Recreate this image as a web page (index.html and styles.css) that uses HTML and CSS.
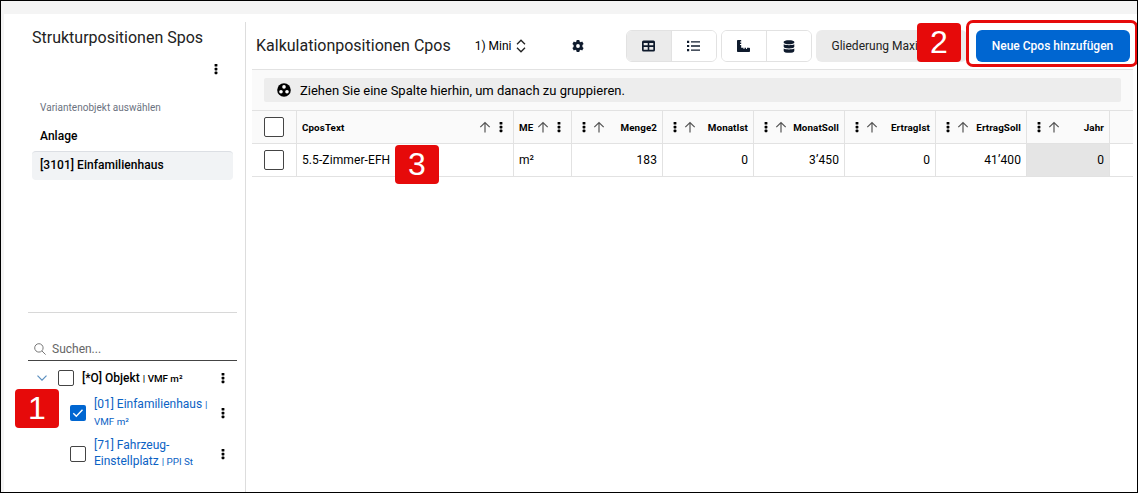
FILE: index.html
```html
<!DOCTYPE html>
<html lang="de">
<head>
  <meta charset="utf-8">
  <title>Kalkulationpositionen</title>
  <link rel="stylesheet" href="styles.css">
</head>
<body>

  <!-- Icons -->
  <svg class="sprite">
    <symbol id="dots" viewBox="0 0 4 12">
      <rect x="0.6" y="1" width="2.8" height="2.6" rx="0.6"/>
      <rect x="0.6" y="4.8" width="2.8" height="2.6" rx="0.6"/>
      <rect x="0.6" y="8.6" width="2.8" height="2.6" rx="0.6"/>
    </symbol>
    <symbol id="arrow" viewBox="0 0 12 12">
      <path d="M6 11.5V1.8M1.3 6.2L6 1.5l4.7 4.7" fill="none" stroke="#555" stroke-width="1.2"/>
    </symbol>
  </svg>

  <div class="app">
    <div class="sidebar">
      <h2>Strukturpositionen Spos</h2>
      <div class="side-menu"><svg class="dots"><use href="#dots"/></svg></div>

      <div class="variants">
        <div class="variant-label">Variantenobjekt auswählen</div>
        <div class="variant">Anlage</div>
        <div class="variant active">[3101] Einfamilienhaus</div>
      </div>

      <div class="search">
        <svg width="12" height="12" viewBox="0 0 12 12" fill="none" stroke="#777"><circle cx="4.9" cy="4.9" r="4.2"/><path d="M8 8l3.6 3.6"/></svg>
        <span>Suchen...</span>
      </div>

      <div class="tree">
        <div class="node root">
          <svg class="chevron" viewBox="0 0 10 6"><path d="M0.5 0.7L5 5.2l4.5-4.5" fill="none" stroke="#5b8fbf" stroke-width="1.2"/></svg>
          <span class="check"></span>
          <div class="node-text">[*O] Objekt <small>| VMF m²</small></div>
          <svg class="dots"><use href="#dots"/></svg>
        </div>
        <div class="node child">
          <span class="check checked"><svg viewBox="0 0 16 16"><path d="M3.3 8.2l3 3 6.2-6.4" fill="none" stroke="#fff" stroke-width="1.4"/></svg></span>
          <div class="node-text">[01] Einfamilienhaus <small>|<br>VMF m²</small></div>
          <svg class="dots"><use href="#dots"/></svg>
        </div>
        <div class="node child last">
          <span class="check"></span>
          <div class="node-text">[71] Fahrzeug-<br>Einstellplatz <small>| PPI St</small></div>
          <svg class="dots"><use href="#dots"/></svg>
        </div>
      </div>
    </div>

    <div class="main">
      <div class="toolbar">
        <h2>Kalkulationpositionen Cpos</h2>
        <div class="view-select">1) Mini
          <svg width="10" height="14" viewBox="0 0 10 14" fill="none" stroke="#222" stroke-width="1.3"><path d="M1 5.3L5 1.2l4 4.1M1 8.7l4 4.1 4-4.1"/></svg>
        </div>
        <svg class="gear" viewBox="0 0 12 12"><path fill-rule="evenodd" d="M4.7 0h2.6l.35 1.6 1 .55L10.2 1.6l1.4 2.3-1.2 1.2v1.8l1.2 1.2-1.4 2.3-1.55-.55-1 .55L7.3 12H4.7l-.35-1.6-1-.55-1.55.55L.4 8.1l1.2-1.2V5.1L.4 3.9l1.4-2.3 1.55.55 1-.55zM6 4.1a1.9 1.9 0 1 0 0 3.8 1.9 1.9 0 0 0 0-3.8z"/></svg>
        <div class="btn-group">
          <button class="on"><svg width="13" height="12" viewBox="0 0 13 12"><path fill-rule="evenodd" d="M1.5 0.5h10A1.5 1.5 0 0 1 13 2v8a1.5 1.5 0 0 1-1.5 1.5h-10A1.5 1.5 0 0 1 0 10V2A1.5 1.5 0 0 1 1.5.5zM1.7 3v2.3h4V3zM7.3 3v2.3h4V3zM1.7 6.9v2.8h4V6.9zM7.3 6.9v2.8h4V6.9z"/></svg></button>
          <button><svg width="13" height="12" viewBox="0 0 13 12"><path d="M0 .8h2.2V3H0zM4 1.2h9v1.4H4zM0 4.9h2.2v2.2H0zM4 5.3h9v1.4H4zM0 9h2.2v2.2H0zM4 9.4h9v1.4H4z"/></svg></button>
        </div>
        <div class="btn-group">
          <button><svg width="13" height="12" viewBox="0 0 13 12"><path d="M.8 0h3.4v1.6H3v.9h1.2v1.6H3V5h1.2v2.8H6.500V9h1V7.800H9V9h1V7.800h2.200a.8.8 0 0 1 .8.8v2.600a.8.8 0 0 1-.8.8H.8a.8.8 0 0 1-.8-.8V.8A.8.8 0 0 1 .8 0z"/></svg></button>
          <button><svg width="12" height="13" viewBox="0 0 12 13"><path d="M6 0.2c3 0 5.300.700 5.300 1.600v.9c0 .9-2.300 1.500-5.300 1.500S.7 3.600.7 2.700v-.9C.7.9 3 .2 6 .2zM.7 4.300C2 5 4 5.200 6 5.200s4-.2 5.300-.9v2.500C11.300 7.800 9 8.400 6 8.400S.7 7.800.7 6.800zM.7 8.500C2 9.200 4 9.400 6 9.400s4-.2 5.300-.9v2.400c0 1.200-2.300 1.900-5.300 1.900s-5.300-.7-5.300-1.900z"/></svg></button>
        </div>
        <button class="btn-grey">Gliederung Maxi</button>
        <button class="btn-primary">Neue Cpos hinzufügen</button>
        <div class="highlight"></div>
      </div>

      <div class="grid">
        <div class="group-panel">
          <div class="drop-zone">
            <svg width="14" height="14" viewBox="0 0 14 14"><circle cx="7" cy="7" r="6.8"/><g fill="#fff"><circle cx="7" cy="3.9" r="1.8"/><circle cx="4" cy="8.8" r="1.8"/><circle cx="10" cy="8.8" r="1.8"/></g></svg>
            <span>Ziehen Sie eine Spalte hierhin, um danach zu gruppieren.</span>
          </div>
        </div>
        <div class="row head">
          <div class="cell"><span class="check big"></span></div>
          <div class="cell"><b>CposText</b><svg class="arrow"><use href="#arrow"/></svg><svg class="dots"><use href="#dots"/></svg></div>
          <div class="cell"><b>ME</b><svg class="arrow"><use href="#arrow"/></svg><svg class="dots"><use href="#dots"/></svg></div>
          <div class="cell num"><svg class="dots"><use href="#dots"/></svg><svg class="arrow"><use href="#arrow"/></svg><b>Menge2</b></div>
          <div class="cell num"><svg class="dots"><use href="#dots"/></svg><svg class="arrow"><use href="#arrow"/></svg><b>MonatIst</b></div>
          <div class="cell num"><svg class="dots"><use href="#dots"/></svg><svg class="arrow"><use href="#arrow"/></svg><b>MonatSoll</b></div>
          <div class="cell num"><svg class="dots"><use href="#dots"/></svg><svg class="arrow"><use href="#arrow"/></svg><b>ErtragIst</b></div>
          <div class="cell num"><svg class="dots"><use href="#dots"/></svg><svg class="arrow"><use href="#arrow"/></svg><b>ErtragSoll</b></div>
          <div class="cell num"><svg class="dots"><use href="#dots"/></svg><svg class="arrow"><use href="#arrow"/></svg><b>Jahr</b></div>
        </div>
        <div class="row">
          <div class="cell"><span class="check big"></span></div>
          <div class="cell">5.5-Zimmer-EFH</div>
          <div class="cell">m²</div>
          <div class="cell num">183</div>
          <div class="cell num">0</div>
          <div class="cell num">3’450</div>
          <div class="cell num">0</div>
          <div class="cell num">41’400</div>
          <div class="cell num locked">0</div>
        </div>
      </div>
    </div>
  </div>

  <!-- Step markers -->
  <div class="marker m1">1</div>
  <div class="marker m2">2</div>
  <div class="marker m3">3</div>

</body>
</html>
```
FILE: styles.css
```css
* {
  box-sizing: border-box;
}

body {
  margin: 0;
  width: 1138px;
  height: 493px;
  overflow: hidden;
  position: relative;
  border: 1px solid #000;
  background: #f4f4f4;
  font-family: Roboto, sans-serif;
  font-size: 12px;
  color: #000;
}

.sprite {
  display: none;
}

svg {
  flex: none;
}

h2 {
  margin: 0;
  font-size: 16px;
  line-height: 20px;
  font-weight: 400;
  color: #222;
  white-space: nowrap;
}

.app {
  display: flex;
  height: 478px;
  margin: 13px 0 0 3px;
  background: #fff;
}

.dots {
  width: 4px;
  height: 12px;
}

.arrow {
  width: 12px;
  height: 12px;
}

/* Sidebar */
.sidebar {
  width: 242px;
  flex: none;
  padding: 14px 9px 0 24px;
  background: linear-gradient(#ddd, #ddd) right 8px / 1px 100% no-repeat;
}

.sidebar h2 {
  padding-left: 4px;
}

.side-menu {
  display: flex;
  justify-content: flex-end;
  padding: 15px 19px 1px 0;
}

.variants {
  height: 237px;
  padding: 24px 4px 0;
  border-bottom: 1px solid #d8d8d8;
}

.variant-label {
  padding-left: 8px;
  font-size: 10px;
  line-height: 16px;
  letter-spacing: 0.03px;
  color: #6b7280;
}

.variant {
  height: 29px;
  margin-top: 6px;
  padding-left: 8px;
  line-height: 29px;
  font-weight: 500;
  letter-spacing: 0.04px;
}

.variant.active {
  margin-top: 0;
  border-radius: 4px;
  border-top: 1px solid #dcdfe4;
  background: #f1f3f5;
  line-height: 27px;
}

.search {
  display: flex;
  align-items: center;
  gap: 6px;
  height: 24px;
  margin-top: 24px;
  padding-left: 6px;
  border-bottom: 1px solid #444;
  color: #666;
}

.tree {
  padding-top: 1px;
}

.node {
  display: flex;
  align-items: center;
  padding-right: 12px;
}

.node-text {
  flex: 1;
  line-height: 16px;
  white-space: nowrap;
}

.node small {
  font-size: 9.8px;
}

.root {
  height: 32px;
  padding-left: 9px;
  font-weight: 500;
}

.root .check {
  margin: 0 8px 0 11px;
}

.chevron {
  width: 10px;
  height: 6px;
}

.child {
  height: 37px;
  padding-left: 42px;
  color: #0b62c4;
}

.child.last {
  height: 45px;
}

.child .check {
  margin-right: 8px;
}

.check {
  width: 16px;
  height: 16px;
  flex: none;
  border: 1px solid #444;
  border-radius: 2px;
  background: #fff;
}

.check.checked {
  border: 0;
  background: #0066d1;
}

.check.checked svg {
  display: block;
}

.check.big {
  width: 20px;
  height: 20px;
}

/* Main */
.main {
  flex: 1;
  min-width: 0;
  padding: 0 4px 0 6px;
}

.toolbar {
  display: flex;
  align-items: center;
  height: 55px;
  padding: 9px 4px 0;
  position: relative;
}

.toolbar > * {
  flex: none;
}

.view-select {
  display: flex;
  align-items: center;
  gap: 4px;
  margin-left: 24px;
  white-space: nowrap;
}

.gear {
  width: 12px;
  height: 12px;
  margin: 0 42px 0 46px;
  fill: #0f1b2d;
}

button {
  height: 32px;
  border: 0;
  font-family: inherit;
  font-size: 12px;
  white-space: nowrap;
}

.btn-group {
  display: flex;
  width: 91px;
  height: 32px;
  margin-right: 4px;
  border: 1px solid #e2e2e2;
  border-radius: 6px;
  overflow: hidden;
}

.btn-group button {
  display: flex;
  flex: 1;
  align-items: center;
  justify-content: center;
  height: 30px;
  padding: 0;
  background: #fff;
  fill: #0f1b2d;
}

.btn-group button + button {
  border-left: 1px solid #e2e2e2;
}

.btn-group .on {
  background: #ebebeb;
}

.btn-grey {
  width: 151px;
  padding: 0 16px;
  border-radius: 6px;
  background: #ebebeb;
  color: #222;
  text-align: left;
}

.btn-primary {
  width: 154px;
  margin-left: 9px;
  border-radius: 6px;
  background: #0066d1;
  color: #fff;
  font-weight: 500;
}

.highlight {
  position: absolute;
  top: 6px;
  right: -5px;
  width: 172px;
  height: 47px;
  border: 3px solid #e60a0a;
  border-radius: 7px;
}

/* Table */
.grid {
  border-top: 1px solid #e2e2e2;
}

.group-panel {
  height: 41px;
  padding: 8px 12px;
  background: #fafafa;
  border-bottom: 1px solid #e2e2e2;
}

.drop-zone {
  display: flex;
  align-items: center;
  gap: 9px;
  height: 24px;
  padding-left: 13px;
  border-radius: 2px;
  background: #ededed;
  font-size: 13px;
}

.row {
  display: grid;
  grid-template-columns: 45px 217px 58px repeat(5, 91px) 83px;
  height: 33px;
  border-bottom: 1px solid #e2e2e2;
}

.cell {
  display: flex;
  align-items: center;
  padding: 0 5px;
  border-right: 1px solid #e2e2e2;
  letter-spacing: 0.1px;
}

.cell:first-child {
  padding-left: 12px;
}

.num {
  justify-content: flex-end;
}

.head {
  background: #fafafa;
}

.head b {
  font-size: 9.8px;
  font-weight: 700;
}

.head .cell .arrow {
  margin-left: auto;
}

.head .cell .dots {
  margin: 0 5px 0 8px;
}

.head .num .arrow {
  margin: 0 auto 0 0;
}

.head .num .dots {
  margin: 0 7px 0 5px;
}

.locked {
  background: #e5e5e5;
}

/* Numbered markers lie over the screen */
.marker {
  position: absolute;
  width: 44px;
  height: 39px;
  border-radius: 4px;
  background: #e60a0a;
  color: #fff;
  font: 32px/38px "Liberation Sans", Arial, sans-serif;
  text-align: center;
}

.m1 {
  left: 14px;
  top: 388px;
}

.m2 {
  left: 916px;
  top: 22px;
}

.m3 {
  left: 394px;
  top: 144px;
}
```
